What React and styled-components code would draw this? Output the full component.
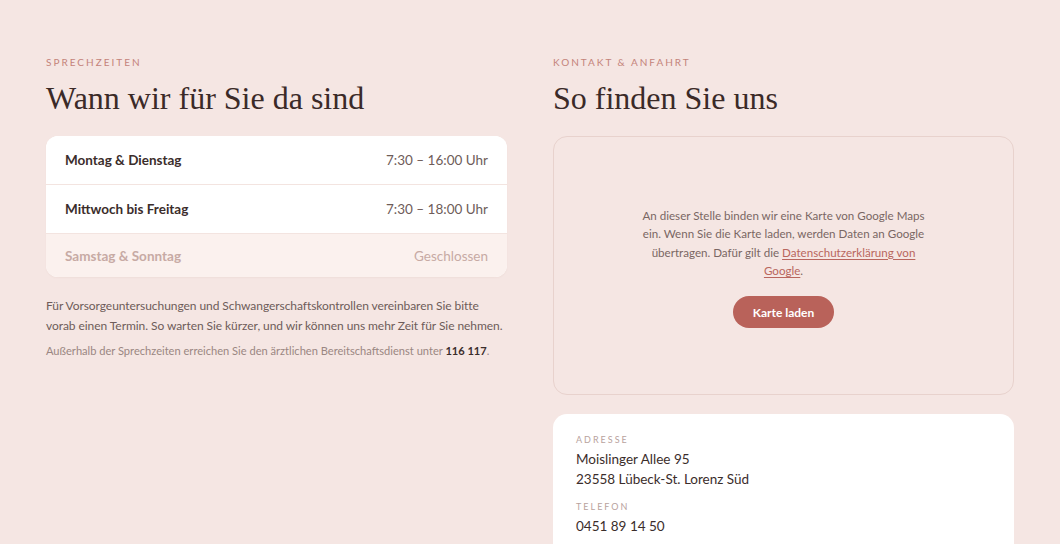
import React from "react";
import styled, { createGlobalStyle } from "styled-components";

const GlobalStyle = createGlobalStyle`
  html, body {
    margin: 0;
    padding: 0;
    background: #f5e6e3;
  }
  body {
    font-family: "Lato", "Noto Sans", sans-serif;
    color: #3b2d2b;
  }
`;

const Page = styled.div`
  display: grid;
  grid-template-columns: 461px 461px;
  gap: 46px;
  padding: 56px 46px 0;
  height: 544px;
  box-sizing: border-box;
  overflow: hidden;
`;

const Column = styled.section`
  display: flex;
  flex-direction: column;
`;

const Eyebrow = styled.div`
  font-size: 10px;
  letter-spacing: 2px;
  text-transform: uppercase;
  color: #c4837a;
  line-height: 12px;
`;

const Heading = styled.h2`
  margin: 12px 0 20px;
  font-family: "Liberation Serif", "DejaVu Serif", serif;
  font-weight: 400;
  font-size: 32px;
  line-height: 36px;
  color: #3b2a28;
`;

const HoursCard = styled.div`
  background: #fff;
  border-radius: 12px;
  overflow: hidden;
  box-shadow: 0 1px 2px rgba(150, 100, 90, 0.06);
`;

const HoursRow = styled.div`
  display: flex;
  justify-content: space-between;
  align-items: center;
  height: ${(p) => (p.$muted ? "43px" : "48px")};
  padding: 0 19px;
  font-size: 13.5px;
  background: ${(p) => (p.$muted ? "#fbf1ee" : "#fff")};
  border-top: ${(p) => (p.$first ? "none" : "1px solid #f3e4e0")};
`;

const Day = styled.span`
  font-weight: 700;
  color: ${(p) => (p.$muted ? "#c7aaa4" : "#3b2d2b")};
`;

const Time = styled.span`
  color: ${(p) => (p.$muted ? "#c7aaa4" : "#6e5c59")};
`;

const Note = styled.p`
  margin: 19px 0 0;
  font-size: 12px;
  line-height: 20px;
  letter-spacing: -0.06px;
  color: #6e5c59;
`;

const SmallNote = styled.p`
  margin: 7px 0 0;
  font-size: 11.1px;
  line-height: 16px;
  color: #9a8682;

  strong {
    color: #3b2d2b;
    font-weight: 700;
  }
`;

const MapBox = styled.div`
  height: 259px;
  box-sizing: border-box;
  border: 1px solid #e8d2cd;
  border-radius: 14px;
  display: flex;
  flex-direction: column;
  align-items: center;
  justify-content: center;
  gap: 16px;
  padding-top: 4px;
`;

const MapText = styled.p`
  margin: 0;
  width: 300px;
  text-align: center;
  font-size: 11.6px;
  line-height: 18.4px;
  color: #7a6663;

  a {
    color: #b9665e;
    text-decoration: underline;
    text-underline-offset: 2px;
  }
`;

const LoadButton = styled.button`
  border: none;
  background: #b9625a;
  color: #fff;
  font-family: inherit;
  font-weight: 700;
  font-size: 12px;
  height: 32px;
  width: 101px;
  border-radius: 16px;
  cursor: pointer;
`;

const InfoCard = styled.div`
  margin-top: 19px;
  background: #fff;
  border-radius: 14px;
  padding: 20px 23px 24px;
`;

const InfoLabel = styled.div`
  font-size: 9px;
  letter-spacing: 2px;
  text-transform: uppercase;
  color: #b8a29d;
  line-height: 12px;
  margin-top: ${(p) => (p.$first ? "0" : "12px")};
`;

const InfoValue = styled.div`
  font-size: 13.5px;
  line-height: 20px;
  color: #3b2d2b;
  margin-top: 3px;
`;

export default function App() {
  return (
    <>
      <GlobalStyle />
      <Page>
        <Column>
          <Eyebrow>Sprechzeiten</Eyebrow>
          <Heading>Wann wir für Sie da sind</Heading>
          <HoursCard>
            <HoursRow $first>
              <Day>Montag &amp; Dienstag</Day>
              <Time>7:30 – 16:00 Uhr</Time>
            </HoursRow>
            <HoursRow>
              <Day>Mittwoch bis Freitag</Day>
              <Time>7:30 – 18:00 Uhr</Time>
            </HoursRow>
            <HoursRow $muted>
              <Day $muted>Samstag &amp; Sonntag</Day>
              <Time $muted>Geschlossen</Time>
            </HoursRow>
          </HoursCard>
          <Note>
            Für Vorsorgeuntersuchungen und Schwangerschaftskontrollen vereinbaren Sie bitte
            vorab einen Termin. So warten Sie kürzer, und wir können uns mehr Zeit für Sie nehmen.
          </Note>
          <SmallNote>
            Außerhalb der Sprechzeiten erreichen Sie den ärztlichen Bereitschaftsdienst unter{" "}
            <strong>116 117</strong>.
          </SmallNote>
        </Column>
        <Column>
          <Eyebrow>Kontakt &amp; Anfahrt</Eyebrow>
          <Heading>So finden Sie uns</Heading>
          <MapBox>
            <MapText>
              An dieser Stelle binden wir eine Karte von Google Maps ein. Wenn Sie die Karte
              laden, werden Daten an Google übertragen. Dafür gilt die{" "}
              <a href="#datenschutz">Datenschutzerklärung von Google</a>.
            </MapText>
            <LoadButton>Karte laden</LoadButton>
          </MapBox>
          <InfoCard>
            <InfoLabel $first>Adresse</InfoLabel>
            <InfoValue>
              Moislinger Allee 95
              <br />
              23558 Lübeck-St. Lorenz Süd
            </InfoValue>
            <InfoLabel>Telefon</InfoLabel>
            <InfoValue>0451 89 14 50</InfoValue>
          </InfoCard>
        </Column>
      </Page>
    </>
  );
}
